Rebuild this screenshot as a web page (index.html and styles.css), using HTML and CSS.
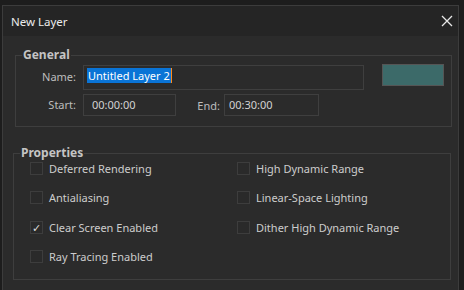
FILE: index.html
```html
<!DOCTYPE html>
<html lang="en">
<head>
  <meta charset="UTF-8" />
  <title>New Layer</title>
  <link rel="stylesheet" href="styles.css">
</head>
<body>
  <div class="backdrop">
    <div class="window">
      <div class="titlebar">
        <span class="title">New Layer</span>
        <svg class="close" width="12" height="12" viewBox="0 0 12 12">
          <path d="M1 1 L11 11 M11 1 L1 11" stroke="#e8e8e8" stroke-width="1.3" fill="none"/>
        </svg>
      </div>

      <div class="content">
        <!-- General -->
        <fieldset class="group general">
          <legend>General</legend>
          <div class="name-row">
            <label class="field-label">Name:</label>
            <div class="input name-input"><span class="selected">Untitled Layer 2</span><span class="caret"></span></div>
            <div class="swatch"></div>
          </div>
          <div class="time-row">
            <label class="field-label">Start:</label>
            <div class="input time-input start">00:00:00</div>
            <label class="end-label">End:</label>
            <div class="input time-input end">00:30:00</div>
          </div>
        </fieldset>

        <!-- Properties -->
        <fieldset class="group properties">
          <legend>Properties</legend>
          <div class="checks">
            <div class="check"><span class="box"></span>Deferred Rendering</div>
            <div class="check"><span class="box"></span>High Dynamic Range</div>
            <div class="check"><span class="box"></span>Antialiasing</div>
            <div class="check"><span class="box"></span>Linear-Space Lighting</div>
            <div class="check"><span class="box checked">&#10003;</span>Clear Screen Enabled</div>
            <div class="check"><span class="box"></span>Dither High Dynamic Range</div>
            <div class="check"><span class="box"></span>Ray Tracing Enabled</div>
          </div>
        </fieldset>
      </div>
    </div>
  </div>
</body>
</html>
```

FILE: styles.css
```css
html, body {
  margin: 0;
  height: 100%;
  overflow: hidden;
}

body {
  background: #1d1d1d;
  font-family: "Noto Sans", "Open Sans", sans-serif;
  font-size: 11px;
  color: #cfcfcf;
}

.backdrop {
  padding: 5px 0 0 2px;
}

.window {
  width: 455px;
  height: 300px;
  border: 1px solid #3c3c3c;
  background: #2b2b2b;
}

.titlebar {
  height: 30px;
  background: #252525;
  display: flex;
  align-items: center;
  justify-content: space-between;
  padding: 0 5px 0 8px;
}

.title {
  color: #ececec;
  font-size: 11.5px;
}

.content {
  padding: 11px 0 0 12px;
}

.group {
  border: 1px solid #3e3e3e;
  margin: 0;
  padding: 0;
}

.group legend {
  font-weight: bold;
  font-size: 12px;
  color: #c4c4c4;
  padding: 0 1px;
  margin-left: 6px;
  line-height: 16px;
}

.general {
  width: 435px;
  height: 78px;
}

.name-row {
  display: flex;
  align-items: flex-start;
  margin-top: 2px;
}

.field-label {
  width: 60px;
  text-align: right;
  color: #bdbdbd;
  line-height: 16px;
}

.name-row .field-label {
  padding-top: 4px;
}

.input {
  border: 1px solid #3f3f3f;
  box-sizing: border-box;
  color: #d2d2d2;
}

.name-input {
  margin-left: 7px;
  width: 281px;
  height: 25px;
  padding: 2px 3px;
  display: flex;
  align-items: flex-start;
}

.selected {
  background: #0a74d6;
  color: #ffffff;
  line-height: 15px;
  padding: 0 1px;
}

.caret {
  width: 1px;
  height: 15px;
  background: #ff8a1a;
}

.swatch {
  margin-left: 18px;
  width: 62px;
  height: 22px;
  box-sizing: border-box;
  border: 1px solid #555555;
  background: #3c6a69;
  margin-top: -1px;
}

.time-row {
  display: flex;
  align-items: center;
  margin-top: 4px;
}

.time-input {
  height: 22px;
  line-height: 20px;
}

.time-input.start {
  margin-left: 7px;
  width: 93px;
  padding-left: 8px;
}

.end-label {
  width: 44px;
  text-align: right;
  color: #bdbdbd;
}

.time-input.end {
  margin-left: 4px;
  width: 95px;
  padding-left: 4px;
}

.properties {
  margin-top: 18px;
  margin-left: -2px;
  width: 436px;
  height: 133px;
}

.checks {
  display: grid;
  grid-template-columns: 207px 1fr;
  grid-auto-rows: 29.3px;
  padding: 1px 0 0 16px;
}

.check {
  display: flex;
  align-items: flex-start;
  color: #cdcdcd;
  line-height: 14px;
}

.box {
  width: 11px;
  height: 11px;
  border: 1px solid #3d3d3d;
  background: #2a2a2a;
  margin-right: 6px;
  font-size: 11px;
  line-height: 11px;
  text-align: center;
  color: #dcdcdc;
  flex-shrink: 0;
}
```
